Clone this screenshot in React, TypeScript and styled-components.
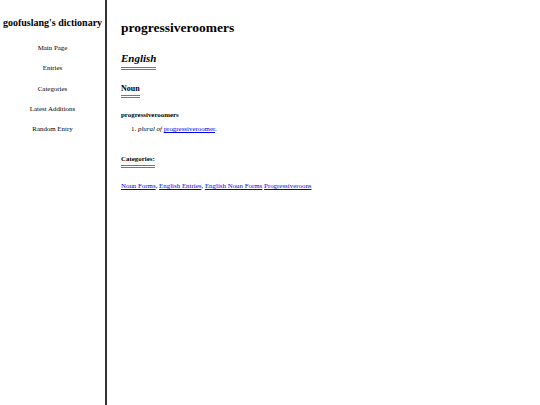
import React from "react";
import styled, { createGlobalStyle } from "styled-components";

const Global = createGlobalStyle`
  html, body { margin: 0; padding: 0; height: 100%; background: #fff; }
  body { font-family: "Liberation Serif", "Times New Roman", serif; color: #000; }
  #root { height: 100%; }
`;

const Page = styled.div`
  display: flex;
  min-height: 405px;
  height: 100%;
`;

const Sidebar = styled.nav`
  width: 105px;
  flex: none;
  border-right: 2px solid #333;
  display: flex;
  flex-direction: column;
  align-items: center;
  padding-top: 17px;
`;

const SiteTitle = styled.div`
  font-size: 10px;
  font-weight: bold;
  white-space: nowrap;
  margin-bottom: 10px;
`;

const NavItem = styled.a`
  font-size: 6.9px;
  color: #000;
  text-decoration: none;
  line-height: 20.3px;
`;

const Main = styled.main`
  flex: 1;
  padding: 20px 0 0 14px;
`;

const Title = styled.h1`
  font-size: 13.5px;
  font-weight: bold;
  margin: 0 0 12px;
`;

const Underlined = styled.div<{ $size: number; $italic?: boolean; $pad: number }>`
  display: inline-block;
  font-size: ${(p) => p.$size}px;
  font-weight: bold;
  font-style: ${(p) => (p.$italic ? "italic" : "normal")};
  border-bottom: 3px double #777;
  padding-bottom: ${(p) => p.$pad}px;
`;

const Block = styled.div<{ $gap: number }>`
  margin-bottom: ${(p) => p.$gap}px;
`;

const Term = styled.div`
  font-size: 6.9px;
  font-weight: bold;
  margin-bottom: 7px;
`;

const Senses = styled.ol`
  margin: 0;
  padding-left: 17px;
  font-size: 6.9px;
`;

const Link = styled.a`
  color: #00e;
  text-decoration: underline;
`;

const Links = styled.div`
  font-size: 6.9px;
`;

export default function App() {
  return (
    <>
      <Global />
      <Page>
        <Sidebar>
          <SiteTitle>goofuslang's dictionary</SiteTitle>
          <NavItem href="#">Main Page</NavItem>
          <NavItem href="#">Entries</NavItem>
          <NavItem href="#">Categories</NavItem>
          <NavItem href="#">Latest Additions</NavItem>
          <NavItem href="#">Random Entry</NavItem>
        </Sidebar>
        <Main>
          <Title>progressiveroomers</Title>
          <Block $gap={7}>
            <Underlined $size={11} $italic $pad={3}>English</Underlined>
          </Block>
          <Block $gap={13}>
            <Underlined $size={8} $pad={2}>Noun</Underlined>
          </Block>
          <Term>progressiveroomers</Term>
          <Block $gap={15}>
            <Senses>
              <li>
                <i>plural of</i> <Link href="#">progressiveroomer</Link>.
              </li>
            </Senses>
          </Block>
          <Block $gap={14}>
            <Underlined $size={6.9} $pad={3}>Categories:</Underlined>
          </Block>
          <Links>
            <Link href="#">Noun Forms</Link>, <Link href="#">English Entries</Link>,{" "}
            <Link href="#">English Noun Forms</Link> <Link href="#">Progressiveroons</Link>
          </Links>
        </Main>
      </Page>
    </>
  );
}
